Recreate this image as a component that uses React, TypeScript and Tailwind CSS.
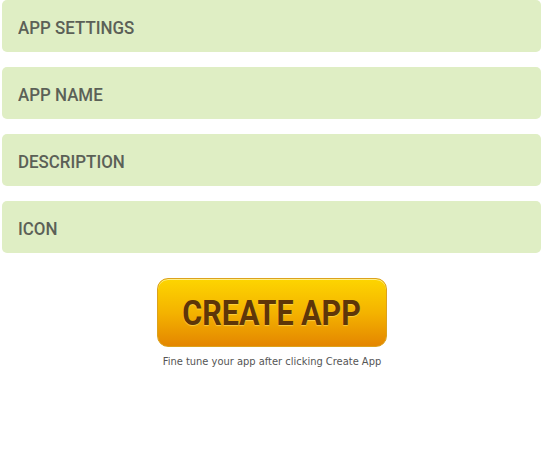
const fields = ['APP SETTINGS', 'APP NAME', 'DESCRIPTION', 'ICON']

export default function App() {
  return (
    <div className="h-[460px] w-[544px] bg-white font-['Roboto',sans-serif]">
      <div className="flex flex-col gap-[15px] pl-[2px] pr-[3px]">
        {fields.map((label) => (
          <div
            key={label}
            className="flex h-[52px] items-center rounded-[5px] bg-[#dfeec4] pl-[16px] pt-[4px] text-[19px] font-medium text-[#5b6057]"
          >
            <span className="inline-block origin-left scale-x-[0.89]">{label}</span>
          </div>
        ))}
      </div>

      <div className="mt-[25px] flex flex-col items-center">
        <button className="flex h-[69px] w-[230px] items-center justify-center rounded-[11px] border border-[#dca21c] bg-gradient-to-b from-[#fdd500] via-[#f4b300] to-[#e48600] pt-[3px] text-[35px] font-bold text-[#5e3608] shadow-[inset_0_1px_0_rgba(255,245,170,0.8)] [text-shadow:0_1px_1px_rgba(255,220,90,0.7)]">
          <span className="inline-block scale-x-[0.87]">CREATE APP</span>
        </button>
        <div className="mt-[7px] font-['DejaVu_Sans',sans-serif] text-[11px] font-stretch-condensed text-[#555]">
          Fine tune your app after clicking Create App
        </div>
      </div>
    </div>
  )
}
